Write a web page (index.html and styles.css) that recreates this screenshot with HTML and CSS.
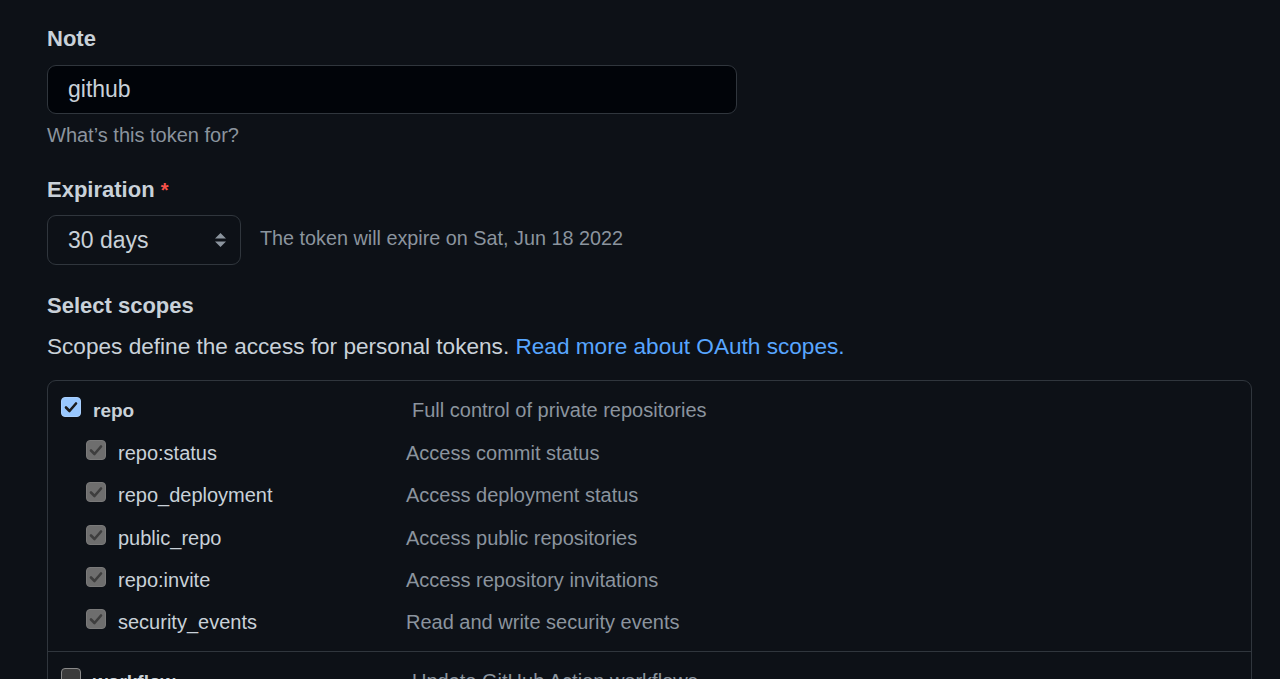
FILE: index.html
```html
<!DOCTYPE html>
<html lang="en">
<head>
<meta charset="utf-8">
<title>New personal access token</title>
<link rel="stylesheet" href="styles.css">
</head>
<body>
<main class="form">
  <div class="label label-note">Note</div>
  <div class="input"><span class="input-text">github</span></div>
  <div class="hint">What’s this token for?</div>

  <div class="label label-exp">Expiration <span class="req">*</span></div>
  <div class="exp-row">
    <div class="select">
      <span class="select-text">30 days</span>
      <svg class="arrows" width="13" height="18" viewBox="0 0 13 18"><path d="M6.5 2 L12 7.5 H1 Z M1 10.5 H12 L6.5 16 Z" fill="#8b949e"/></svg>
    </div>
    <span class="exp-note">The token will expire on Sat, Jun 18 2022</span>
  </div>

  <div class="label label-scopes">Select scopes</div>
  <p class="scopes-desc">Scopes define the access for personal tokens. <a class="link" href="#">Read more about OAuth scopes.</a></p>

  <div class="scopes">
    <div class="group">
      <div class="row parent">
        <span class="cb checked"><svg width="20" height="20" viewBox="0 0 20 20"><path d="M5 10.5 L8.5 14 L15 6.5" fill="none" stroke="#1c1c1c" stroke-width="2.6" stroke-linecap="round" stroke-linejoin="round"/></svg></span>
        <span class="name strong">repo</span>
        <span class="desc">Full control of private repositories</span>
      </div>
      <div class="row child">
        <span class="cb disabled"><svg width="20" height="20" viewBox="0 0 20 20"><path d="M5 10.5 L8.5 14 L15 6.5" fill="none" stroke="#3e3e3e" stroke-width="2.6" stroke-linecap="round" stroke-linejoin="round"/></svg></span>
        <span class="name">repo:status</span>
        <span class="desc">Access commit status</span>
      </div>
      <div class="row child">
        <span class="cb disabled"><svg width="20" height="20" viewBox="0 0 20 20"><path d="M5 10.5 L8.5 14 L15 6.5" fill="none" stroke="#3e3e3e" stroke-width="2.6" stroke-linecap="round" stroke-linejoin="round"/></svg></span>
        <span class="name">repo_deployment</span>
        <span class="desc">Access deployment status</span>
      </div>
      <div class="row child">
        <span class="cb disabled"><svg width="20" height="20" viewBox="0 0 20 20"><path d="M5 10.5 L8.5 14 L15 6.5" fill="none" stroke="#3e3e3e" stroke-width="2.6" stroke-linecap="round" stroke-linejoin="round"/></svg></span>
        <span class="name">public_repo</span>
        <span class="desc">Access public repositories</span>
      </div>
      <div class="row child">
        <span class="cb disabled"><svg width="20" height="20" viewBox="0 0 20 20"><path d="M5 10.5 L8.5 14 L15 6.5" fill="none" stroke="#3e3e3e" stroke-width="2.6" stroke-linecap="round" stroke-linejoin="round"/></svg></span>
        <span class="name">repo:invite</span>
        <span class="desc">Access repository invitations</span>
      </div>
      <div class="row child">
        <span class="cb disabled"><svg width="20" height="20" viewBox="0 0 20 20"><path d="M5 10.5 L8.5 14 L15 6.5" fill="none" stroke="#3e3e3e" stroke-width="2.6" stroke-linecap="round" stroke-linejoin="round"/></svg></span>
        <span class="name">security_events</span>
        <span class="desc">Read and write security events</span>
      </div>
    </div>
    <div class="group">
      <div class="row parent">
        <span class="cb unchecked"></span>
        <span class="name strong">workflow</span>
        <span class="desc">Update GitHub Action workflows</span>
      </div>
    </div>
  </div>
</main>
</body>
</html>
```

FILE: styles.css
```css
html, body {
  margin: 0;
  padding: 0;
  background: #0d1117;
  height: 679px;
  overflow: hidden;
}

body {
  font-family: "Liberation Sans", Arial, sans-serif;
  color: #c9d1d9;
}

.form {
  padding: 24px 28px 0 47px;
}

.label {
  font-size: 22px;
  font-weight: bold;
  line-height: 30px;
  color: #c9d1d9;
}

.req {
  color: #f85149;
  font-size: 20px;
}

.input {
  margin-top: 11px;
  width: 690px;
  height: 49px;
  box-sizing: border-box;
  border: 1px solid #30363d;
  border-radius: 9px;
  background: #010409;
  display: flex;
  align-items: center;
  padding-left: 20px;
}

.input-text {
  font-size: 23px;
  color: #c9d1d9;
}

.hint {
  margin-top: 6px;
  font-size: 20px;
  line-height: 30px;
  color: #8b949e;
}

.label-exp {
  margin-top: 25px;
}

.exp-row {
  margin-top: 10px;
  display: flex;
  align-items: center;
  gap: 19px;
}

.select {
  width: 194px;
  height: 50px;
  box-sizing: border-box;
  border: 1px solid #30363d;
  border-radius: 9px;
  background: #0d1117;
  display: flex;
  align-items: center;
  justify-content: space-between;
  padding: 0 13px 0 20px;
}

.select-text {
  font-size: 23px;
  color: #c9d1d9;
}

.arrows {
  display: block;
}

.exp-note {
  font-size: 19.8px;
  color: #8b949e;
  margin-top: -3px;
}

.label-scopes {
  margin-top: 26px;
}

.scopes-desc {
  margin: 10px 0 0;
  font-size: 22.6px;
  line-height: 32px;
  color: #c9d1d9;
}

.link {
  color: #58a6ff;
  text-decoration: none;
}

.scopes {
  margin-top: 17px;
  width: 1205px;
  box-sizing: border-box;
  border: 1px solid #30363d;
  border-radius: 9px;
}

.group {
  padding: 8.8px 0 6.8px;
}

.group + .group {
  border-top: 1px solid #30363d;
}

.row {
  display: flex;
  align-items: center;
  height: 42.4px;
  font-size: 20px;
}

.row.parent {
  padding-left: 13px;
}

.row.child {
  padding-left: 38px;
}

.cb {
  width: 20px;
  height: 20px;
  box-sizing: border-box;
  border-radius: 4px;
  flex: none;
  margin-right: 12px;
  margin-bottom: 7px;
  display: block;
}

.cb svg {
  display: block;
  margin: -1px;
}

.cb.checked {
  background: #99c8ff;
  border: 1px solid #a9d0ff;
}

.cb.disabled {
  background: #6e6e6e;
  border: 1px solid #7a7a7a;
}

.cb.unchecked {
  background: #3b3b3b;
  border: 1px solid #8a8a8a;
}

.name {
  color: #c9d1d9;
}

.parent .name {
  width: 319px;
}

.child .name {
  width: 288px;
}

.name.strong {
  font-weight: bold;
  font-size: 19px;
}

.desc {
  color: #8b949e;
}
```
